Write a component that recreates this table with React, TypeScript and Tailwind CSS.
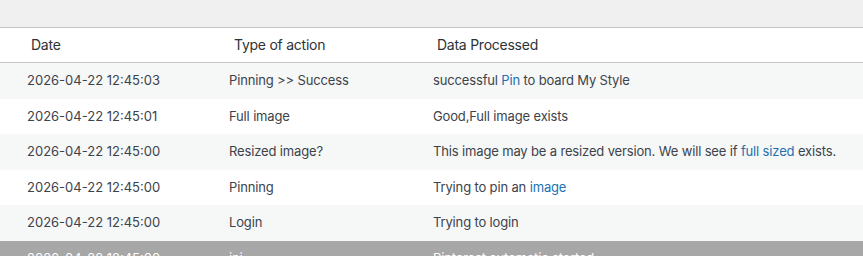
import React from 'react'

type Part = string | { link: string }

type Row = {
  date: string
  action: string
  data: Part[]
}

const rows: Row[] = [
  { date: '2026-04-22 12:45:03', action: 'Pinning >> Success', data: ['successful ', { link: 'Pin' }, ' to board My Style'] },
  { date: '2026-04-22 12:45:01', action: 'Full image', data: ['Good,Full image exists'] },
  {
    date: '2026-04-22 12:45:00',
    action: 'Resized image?',
    data: ['This image may be a resized version. We will see if ', { link: 'full sized' }, ' exists.'],
  },
  { date: '2026-04-22 12:45:00', action: 'Pinning', data: ['Trying to pin an ', { link: 'image' }] },
  { date: '2026-04-22 12:45:00', action: 'Login', data: ['Trying to login'] },
]

const App: React.FC = () => {
  return (
    <div className="h-[256px] overflow-hidden bg-white font-['Inter',sans-serif] text-[13px] leading-[19.5px] text-[#3c434a]">
      {/* admin bar strip */}
      <div className="h-[28px] bg-[#f0f0f1] border-b border-[#c3c4c7]" />

      <table className="w-full table-fixed border-collapse">
        <colgroup>
          <col className="w-[219px]" />
          <col className="w-[204px]" />
          <col />
        </colgroup>
        <thead>
          <tr className="border-b border-[#c3c4c7] text-[14px] tracking-[-0.25px] text-[#2c3338]">
            <th className="text-left font-normal pl-[31px] py-[7px] leading-[20px]">Date</th>
            <th className="text-left font-normal pl-[15px] py-[7px] leading-[20px]">Type of action</th>
            <th className="text-left font-normal pl-[14px] py-[7px] leading-[20px]">Data Processed</th>
          </tr>
        </thead>
        <tbody>
          {rows.map((row, i) => (
            <tr key={i} className={i % 2 === 0 ? 'bg-[#f6f7f7]' : 'bg-white'}>
              <td className="pl-[27px] py-[8px]">{row.date}</td>
              <td className="pl-[10px] py-[8px] tracking-[-0.15px]">{row.action}</td>
              <td className="pl-[10px] py-[8px] tracking-[-0.15px]">
                {row.data.map((p, j) =>
                  typeof p === 'string' ? (
                    <span key={j}>{p}</span>
                  ) : (
                    <a key={j} href="#" className="text-[#2271b1]">
                      {p.link}
                    </a>
                  )
                )}
              </td>
            </tr>
          ))}
          <tr className="bg-[#a7a7a7] text-white">
            <td className="pl-[27px] py-[8px]">2026-04-22 12:45:00</td>
            <td className="pl-[10px] py-[8px] tracking-[-0.15px]">ini</td>
            <td className="pl-[10px] py-[8px] tracking-[-0.15px]">Pinterest automatic started</td>
          </tr>
        </tbody>
      </table>
    </div>
  )
}

export default App
